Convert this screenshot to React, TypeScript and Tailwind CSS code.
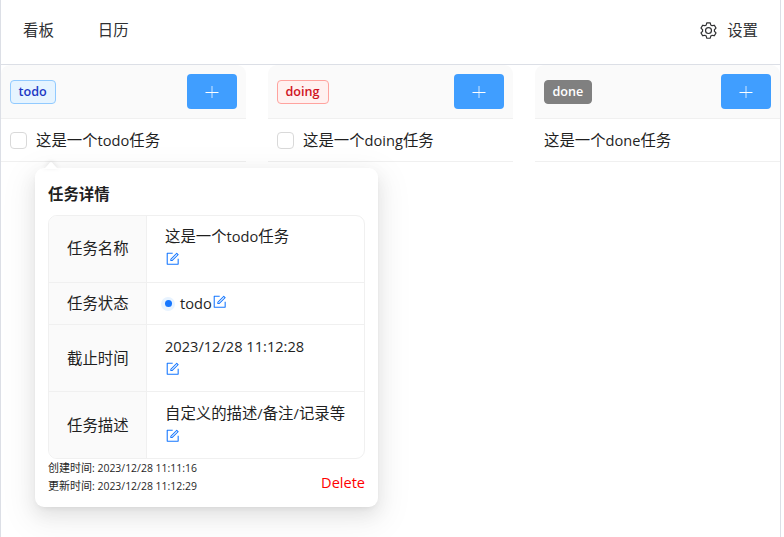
import { AiOutlineForm } from "react-icons/ai";

const CJK = /([\u4e00-\u9fff]+)/;

function Mixed({ text }: { text: string }) {
  return (
    <>
      {text.split(CJK).map((part, i) =>
        CJK.test(part) ? (
          <span key={i}>{part}</span>
        ) : (
          <span key={i} className="text-[0.95em]">{part}</span>
        ),
      )}
    </>
  );
}

function Gear() {
  return (
    <svg className="ml-auto size-[19px]" viewBox="0 0 1024 1024" fill="currentColor">
      <path d="M600.704 64a32 32 0 0 1 30.464 22.208l35.2 109.376c14.784 7.232 28.928 15.36 42.432 24.512l112.384-24.192a32 32 0 0 1 34.432 15.36L944.32 364.8a32 32 0 0 1-4.032 37.504l-77.12 85.12a357.12 357.12 0 0 1 0 49.024l77.12 85.248a32 32 0 0 1 4.032 37.504l-88.704 153.6a32 32 0 0 1-34.432 15.296L708.8 803.904c-13.44 9.088-27.648 17.28-42.368 24.512l-35.264 109.376A32 32 0 0 1 600.704 960H423.296a32 32 0 0 1-30.464-22.208L357.696 828.48a351.616 351.616 0 0 1-42.56-24.64l-112.32 24.256a32 32 0 0 1-34.432-15.36L79.68 659.2a32 32 0 0 1 4.032-37.504l77.12-85.248a357.12 357.12 0 0 1 0-48.896l-77.12-85.248A32 32 0 0 1 79.68 364.8l88.704-153.6a32 32 0 0 1 34.432-15.296l112.32 24.256c13.568-9.152 27.776-17.408 42.56-24.64l35.2-109.312A32 32 0 0 1 423.232 64H600.64zm-23.424 64H446.72l-36.352 113.088-24.512 11.968a294.113 294.113 0 0 0-34.816 20.096l-22.656 15.36-116.224-25.088-65.28 113.152 79.68 88.192-1.92 27.136a293.12 293.12 0 0 0 0 40.192l1.92 27.136-79.808 88.192 65.344 113.152 116.224-25.024 22.656 15.296a294.113 294.113 0 0 0 34.816 20.096l24.512 11.968L446.72 896h130.688l36.48-113.152 24.448-11.904a288.282 288.282 0 0 0 34.752-20.096l22.592-15.296 116.288 25.024 65.28-113.152-79.744-88.192 1.92-27.136a293.12 293.12 0 0 0 0-40.256l-1.92-27.136 79.808-88.128-65.344-113.152-116.288 24.96-22.592-15.232a287.616 287.616 0 0 0-34.752-20.096l-24.448-11.904L577.344 128zM512 320a192 192 0 1 1 0 384 192 192 0 0 1 0-384zm0 64a128 128 0 1 0 0 256 128 128 0 0 0 0-256z" />
    </svg>
  );
}

function Column({ name, tag, checkable }: { name: string; tag: string; checkable?: boolean }) {
  return (
    <section className="w-[245px]">
      <div className="flex h-[54px] items-center justify-between rounded-t-[9px] border-b border-[#f0f0f0] bg-[#fafafa] pr-[9px] pl-[9px]">
        <span className={`flex h-6 items-center rounded-[4px] border pt-px pr-2 pl-[7.5px] text-[12.6px] leading-none font-semibold ${tag}`}>
          {name}
        </span>
        <button className="flex h-[35px] w-[50px] items-center justify-center rounded-[4px] bg-[#409eff]">
          <svg width="14" height="14" viewBox="0 0 14 14" stroke="#fff" strokeWidth="1">
            <path d="M0.5 7.5h13" />
            <path d="M7 1v12" strokeOpacity=".75" />
          </svg>
        </button>
      </div>
      <div className="flex h-[43px] items-center border-b border-[#f0f0f0] pl-[9px]">
        {checkable && <span className="mr-[9px] size-[17px] rounded-[4px] border border-[#d9d9d9] bg-white" />}
        <span className="whitespace-nowrap">
          <Mixed text={`这是一个${name}任务`} />
        </span>
      </div>
    </section>
  );
}

function Row({ label, value, height, inline, pad = "pt-[9px]", labelPad = "pt-px" }: { label: string; value: string; height: string; inline?: boolean; pad?: string; labelPad?: string }) {
  return (
    <div className={`flex border-b border-[#f0f0f0] last:border-b-0 ${height}`}>
      <div className={`flex w-[98px] items-center border-r border-[#f0f0f0] bg-[#fafafa] pl-[18px] ${labelPad}`}>{label}</div>
      {inline ? (
        <div className="flex items-center pb-px pl-[14px]">
          <span className="mt-px mr-[5px] flex size-[14px] items-center justify-center rounded-full bg-[#e8f3ff]">
            <span className="size-[7px] rounded-full bg-[#1677ff]" />
          </span>
          <Mixed text={value} />
          <AiOutlineForm className="mb-[3px] size-[15.4px] text-[#1677ff]" />
        </div>
      ) : (
        <div className={`pl-[18px] leading-6 whitespace-nowrap ${pad}`}>
          <div>
            <Mixed text={value} />
          </div>
          <AiOutlineForm className="mt-[2px] size-[15.4px] text-[#1677ff]" />
        </div>
      )}
    </div>
  );
}

export default function App() {
  return (
    <div className="h-[537px] w-[784px] overflow-hidden bg-white font-['Open_Sans','Noto_Sans_CJK_SC',sans-serif] text-[15.4px] leading-6 text-[#1f1f1f]">
      <div className="h-full w-[781px] border-x border-[#dcdfe6]">
        <header className="flex h-[65px] items-center border-b border-[#dcdfe6] pr-[22px] pb-[3px] pl-[22px] text-[#303133]">
          <span>看板</span>
          <span className="ml-11">日历</span>
          <Gear />
          <span className="ml-[9px]">设置</span>
        </header>
        <main className="relative flex justify-between">
          <Column name="todo" tag="border-[#91caff] bg-[#e6f4ff] text-[#1d39c4]" checkable />
          <Column name="doing" tag="border-[#ffa39e] bg-[#fff1f0] text-[#cf1322]" checkable />
          <Column name="done" tag="border-[#808080] bg-[#808080] text-white" />
          <div className="absolute top-[103px] left-[34px] h-[339px] w-[343px] rounded-[9px] bg-white px-[13px] pt-[15px] shadow-[0_7px_18px_0_rgba(0,0,0,0.08),0_3px_7px_-4px_rgba(0,0,0,0.12),0_10px_31px_9px_rgba(0,0,0,0.05)]">
            <svg className="absolute -top-[7px] left-[7px] drop-shadow-[0_-1px_2px_rgba(0,0,0,0.1)]" width="18" height="8" viewBox="0 0 18 8">
              <path d="M0 8C2 8 3 7 4 6L8 1.5Q9 .5 10 1.5L14 6C15 7 16 8 18 8Z" fill="#fff" />
            </svg>
            <h2 className="h-[32px] font-semibold">任务详情</h2>
            <div className="overflow-hidden rounded-[9px] border border-[#f0f0f0]">
              <Row label="任务名称" value="这是一个todo任务" height="h-[67px]" pad="pt-[8px]" labelPad="pt-0" />
              <Row label="任务状态" value="todo" height="h-[42px]" inline />
              <Row label="截止时间" value="2023/12/28 11:12:28" height="h-[67px]" />
              <Row label="任务描述" value="自定义的描述/备注/记录等" height="h-[66px]" />
            </div>
            <footer className="flex items-end justify-between">
              <div className="text-[11px] leading-[18px]">
                <div><Mixed text="创建时间: 2023/12/28 11:11:16" /></div>
                <div><Mixed text="更新时间: 2023/12/28 11:12:29" /></div>
              </div>
              <button className="mb-px text-[14.55px] leading-6 text-[#ff0000]">Delete</button>
            </footer>
          </div>
        </main>
      </div>
    </div>
  );
}
